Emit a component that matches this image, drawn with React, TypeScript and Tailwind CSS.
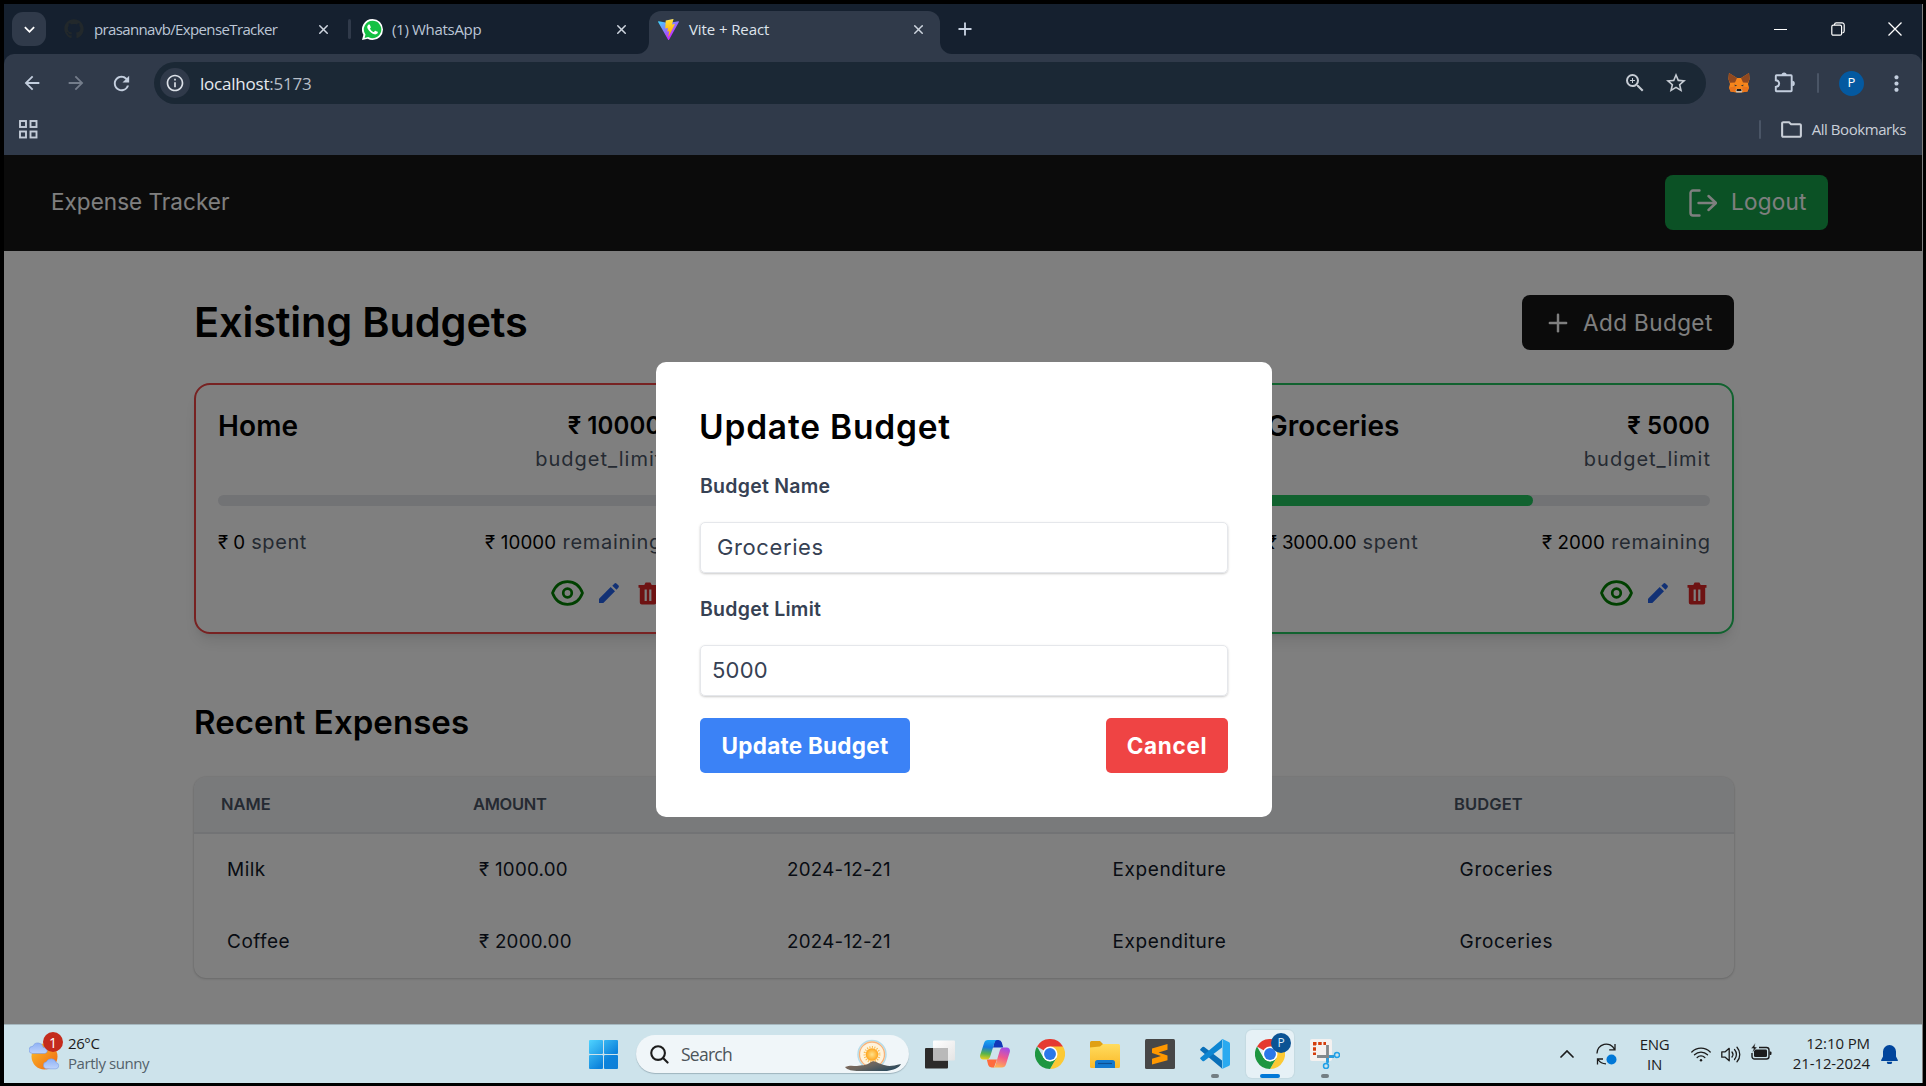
import type { ReactNode } from "react";
import { FaGithub } from "react-icons/fa";
import {
  MdArrowBack,
  MdArrowForward,
  MdRefresh,
  MdInfoOutline,
  MdZoomIn,
  MdStarBorder,
  MdMoreVert,
  MdOutlineFolder,
  MdKeyboardArrowDown,
} from "react-icons/md";
import { Plus, X } from "lucide-react";

/* ---------- Browser icons ---------- */

function WhatsAppIcon() {
  return (
    <svg viewBox="0 0 24 24" className="size-[21px]">
      <path d="M12 0a12 12 0 0 1 0 24 12 12 0 0 1-5.6-1.4L0 24l1.6-6A12 12 0 0 1 12 0z" fill="#fff" />
      <path d="M12 2a10 10 0 1 1-5 18.6l-4 1 1-3.8A10 10 0 0 1 12 2z" fill="#15c143" />
      <path
        d="M17.472 14.382c-.297-.149-1.758-.867-2.03-.967-.273-.099-.471-.148-.67.15-.197.297-.767.966-.94 1.164-.173.199-.347.223-.644.075-.297-.15-1.255-.463-2.39-1.475-.883-.788-1.48-1.761-1.653-2.059-.173-.297-.018-.458.13-.606.134-.133.298-.347.446-.52.149-.174.198-.298.298-.497.099-.198.05-.371-.025-.52-.075-.149-.669-1.612-.916-2.207-.242-.579-.487-.5-.669-.51-.173-.008-.371-.01-.57-.01-.198 0-.52.074-.792.372-.272.297-1.04 1.016-1.04 2.479 0 1.462 1.065 2.875 1.213 3.074.149.198 2.096 3.2 5.077 4.487.709.306 1.262.489 1.694.625.712.227 1.36.195 1.871.118.571-.085 1.758-.719 2.006-1.413.248-.694.248-1.289.173-1.413-.074-.124-.272-.198-.57-.347z"
        fill="#fff"
      />
    </svg>
  );
}

function ViteIcon() {
  return (
    <svg viewBox="0 0 256 257" className="size-[21px]">
      <defs>
        <linearGradient id="viteBody" x1="0" x2="0.57" y1="0.08" y2="0.79">
          <stop offset="0" stopColor="#41d1ff" />
          <stop offset="1" stopColor="#bd34fe" />
        </linearGradient>
        <linearGradient id="viteBolt" x1="0.43" x2="0.5" y1="0.02" y2="0.9">
          <stop offset="0" stopColor="#ffea83" />
          <stop offset="0.1" stopColor="#ffdd35" />
          <stop offset="1" stopColor="#ffa800" />
        </linearGradient>
      </defs>
      <path fill="url(#viteBody)" d="M255.150 37.940 134.900 252.980c-2.480 4.440-8.860 4.470-11.380.050L.880 37.960c-2.750-4.810 1.370-10.640 6.820-9.660l120.390 21.520a6.540 6.540 0 0 0 2.320 0l117.870-21.490c5.440-.990 9.570 4.800 6.870 9.610Z" />
      <path fill="url(#viteBolt)" d="M185.430.060 96.440 17.500a3.270 3.270 0 0 0-2.630 3.010l-5.480 92.460a3.270 3.270 0 0 0 4 3.380l24.780-5.720a3.270 3.270 0 0 1 3.940 3.850l-7.360 36.050a3.270 3.270 0 0 0 4.150 3.780l15.300-4.650a3.270 3.270 0 0 1 4.150 3.790l-11.700 56.620c-.730 3.540 3.980 5.470 5.940 2.440l1.310-2.030 72.520-144.720c1.210-2.420-.880-5.190-3.540-4.670l-25.500 4.920a3.270 3.270 0 0 1-3.770-4.120l16.650-57.700a3.270 3.270 0 0 0-3.770-4.120Z" />
    </svg>
  );
}

function FoxIcon() {
  return (
    <svg viewBox="0 0 22 20" className="h-[20px] w-[22px]">
      <path d="M1 0l8 5h4l8-5 .6 6-1.6 5 1 3.500-1.500 4-3 .4L14 19.600H8l-2.500-.7-3-.4L1 14.500 2 11 .400 6z" fill="#f6851b" />
      <path d="M1 0l8 5-2 4.500-5 .3L.400 6zM21 0l-8 5 2 4.500 5 .3L21.600 6z" fill="#8f4820" />
      <path d="M1 14.500l6-1 1.500 4-3 1.400-3-.4zM21 14.500l-6-1-1.500 4 3 1.400 3-.4z" fill="#e8731c" />
      <path d="M6.500 11.500l2.700 1.300-2.300.5zM15.500 11.500l-2.700 1.300 2.300.5z" fill="#2b3440" />
      <path d="M7.500 17l1.500-.8h4l1.500.8-.8 2.600H8.300z" fill="#c9bfb5" />
      <path d="M9 16h4l.5 1.900h-5z" fill="#1c1c1c" />
    </svg>
  );
}

function PuzzleIcon() {
  return (
    <svg viewBox="0 0 22 21" className="h-[21px] w-[22px]">
      <path
        d="M2.500 3.200H17a.7.7 0 0 1 .7.700v14.700a.7.7 0 0 1-.7.700H2.500a.7.7 0 0 1-.7-.7v-3.700c2.600-.3 3.400-1.700 3.400-3.300S4.400 8.600 1.800 8.300V3.900a.7.7 0 0 1 .7-.7z"
        fill="none"
        stroke="currentColor"
        strokeWidth="1.900"
      />
      <path d="M7.500 3a2.600 2.600 0 0 1 5.200 0zM18.200 8.800a2.600 2.600 0 0 1 0 5.200z" fill="currentColor" />
    </svg>
  );
}

function AppsIcon() {
  return (
    <svg viewBox="0 0 19 19" className="size-[19px]" fill="none" stroke="#c4ccd8" strokeWidth="1.900">
      <rect x="1" y="1" width="6" height="6" />
      <rect x="11.500" y="1" width="6" height="6" />
      <rect x="1" y="11.500" width="6" height="6" />
      <rect x="11.500" y="11.500" width="6" height="6" />
    </svg>
  );
}

/* ---------- Page icons ---------- */

function LogoutIcon() {
  return (
    <svg viewBox="0 0 28 28" className="size-[28px]" fill="none" stroke="currentColor" strokeWidth="2.400" strokeLinecap="round" strokeLinejoin="round">
      <path d="M10.500 1.500H4a2.500 2.500 0 0 0-2.500 2.500v20A2.500 2.500 0 0 0 4 26.500h6.500" />
      <path d="M9.500 14H27M19.500 7l7.500 7-7.500 7" />
    </svg>
  );
}

function EyeIcon() {
  return (
    <svg viewBox="0 0 33 26" className="h-[26px] w-[33px]" fill="none" stroke="#008000" strokeWidth="2.700">
      <path d="M1.500 13C4.300 5.600 9.800 1.600 16.500 1.600S28.700 5.600 31.500 13c-2.800 7.400-8.300 11.400-15 11.400S4.300 20.400 1.500 13z" strokeLinejoin="round" />
      <circle cx="16.500" cy="13" r="4.300" />
    </svg>
  );
}

function PencilIcon() {
  return (
    <svg viewBox="0 0 20 20" className="size-[20px]" fill="#2563eb">
      <path d="M0 20v-4.300L11.700 4l4.300 4.300L4.300 20z" />
      <path d="M13.300 2.700l2-2a1.700 1.700 0 0 1 2.400 0l1.600 1.600a1.700 1.700 0 0 1 0 2.400l-1.800 2z" />
    </svg>
  );
}

function TrashIcon() {
  return (
    <svg viewBox="0 0 20 23" className="h-[23px] w-[20px]" fill="#dc2626">
      <path fillRule="evenodd" d="M.5 3h5.800L7.600.5h4.800L13.700 3h5.800v2.700h-1.300v14.800a2 2 0 0 1-2 2H3.800a2 2 0 0 1-2-2V5.700H.5zM6.600 7.500v11.500h2.200V7.500zm4.600 0v11.500h2.200V7.500z" />
    </svg>
  );
}

/* ---------- Taskbar icons ---------- */

function WeatherIcon() {
  return (
    <svg viewBox="0 0 31 34" className="h-[34px] w-[31px]">
      <defs>
        <linearGradient id="sunDisc" x1="0" y1="0" x2="1" y2="1">
          <stop offset="0" stopColor="#fbc02d" />
          <stop offset="1" stopColor="#f0640e" />
        </linearGradient>
        <linearGradient id="cloudFill" x1="0" y1="0" x2="0" y2="1">
          <stop offset="0" stopColor="#8fb1f5" />
          <stop offset="1" stopColor="#bdd3fb" />
        </linearGradient>
      </defs>
      <circle cx="15.500" cy="19.500" r="13" fill="url(#sunDisc)" />
      <path d="M3.500 16.500a3.600 3.600 0 0 1 .3-7.200 5.500 5.500 0 0 1 10.500 1.200 3 3 0 0 1 1.700 6z" fill="url(#cloudFill)" stroke="#6f93e0" strokeWidth=".5" />
      <path d="M17 31.800a3.600 3.600 0 0 1 .3-7 5.400 5.400 0 0 1 10 .9 3.100 3.100 0 0 1-.3 6.100z" fill="url(#cloudFill)" stroke="#6f93e0" strokeWidth=".5" />
    </svg>
  );
}

function WindowsIcon() {
  return (
    <svg viewBox="0 0 29 29" className="size-[29px]">
      <defs>
        <linearGradient id="winFill" gradientUnits="userSpaceOnUse" x1="0" y1="0" x2="26" y2="29">
          <stop offset="0" stopColor="#4fd3ff" />
          <stop offset="0.700" stopColor="#0c83dc" />
          <stop offset="1" stopColor="#0f7fd6" />
        </linearGradient>
      </defs>
      <g fill="url(#winFill)">
        <rect width="14" height="14" rx="1" />
        <rect x="15" width="14" height="14" rx="1" />
        <rect y="15" width="14" height="14" rx="1" />
        <rect x="15" y="15" width="14" height="14" rx="1" />
      </g>
    </svg>
  );
}

function SunriseArt() {
  return (
    <svg viewBox="0 0 56 33" className="h-[33px] w-[56px]">
      <defs>
        <linearGradient id="hill" x1="0" y1="0" x2="1" y2="0.600">
          <stop offset="0" stopColor="#8d6a55" />
          <stop offset="0.500" stopColor="#6b6660" />
          <stop offset="1" stopColor="#2d4a5c" />
        </linearGradient>
        <radialGradient id="sunCore">
          <stop offset="0" stopColor="#ffe28a" />
          <stop offset="1" stopColor="#ffa41c" />
        </radialGradient>
      </defs>
      <circle cx="27" cy="15.500" r="14" fill="#fff3dc" stroke="#b6dcea" strokeWidth="1.500" />
      <circle cx="27" cy="15.500" r="12.500" fill="none" stroke="#f7b27a" strokeWidth="1.300" />
      <circle cx="27" cy="15.500" r="7.500" fill="none" stroke="#f9b949" strokeWidth="2" strokeDasharray="1 1.500" />
      <circle cx="27" cy="15.500" r="6.300" fill="url(#sunCore)" />
      <path d="M0 28c5-2 8-1 12-1 4-1 9 0 14-4 3-2 6 1 10 2 5 2 9 3 20 0-2 4-8 6-14 7H14c-6 0-12-1-14-4z" fill="url(#hill)" />
    </svg>
  );
}

function TaskViewIcon() {
  return (
    <svg viewBox="0 0 30 29" className="h-[29px] w-[30px]">
      <defs>
        <linearGradient id="tvFront" x1="0" y1="0" x2="1" y2="1">
          <stop offset="0" stopColor="#fff" />
          <stop offset="1" stopColor="#e4e4e4" />
        </linearGradient>
      </defs>
      <rect y="8" width="23" height="20.500" rx="1" fill="#2c2b2a" />
      <rect x="8" y=".5" width="22" height="20" rx="1" fill="url(#tvFront)" />
      <rect x="8" y="8" width="15" height="12.500" fill="#b9b9b9" />
    </svg>
  );
}

function CopilotIcon() {
  return (
    <svg viewBox="0 0 30 28" className="h-[28px] w-[30px]">
      <defs>
        <linearGradient id="cpLeft" x1="0.300" y1="0" x2="0.200" y2="1">
          <stop offset="0" stopColor="#1ba6f2" />
          <stop offset="0.350" stopColor="#1479e0" />
          <stop offset="0.700" stopColor="#5bb548" />
          <stop offset="1" stopColor="#f3cf1b" />
        </linearGradient>
        <linearGradient id="cpRight" x1="0.700" y1="0" x2="0.400" y2="1">
          <stop offset="0" stopColor="#a04be8" />
          <stop offset="0.500" stopColor="#f0598c" />
          <stop offset="1" stopColor="#ffb054" />
        </linearGradient>
      </defs>
      <path d="M15 0h3.500a3.500 3.500 0 0 1 3.300 2.600L23.200 7.500H17l-4 0z" fill="#1238b8" />
      <path d="M6.800 19.500H17L14 27.500h-2.500a3.500 3.500 0 0 1-3.300-2.500z" fill="#ff6b3d" />
      <path d="M8 0h9.500c-2 0-2.600 1.300-3.200 3.300L10.200 16.500c-.6 2-1.800 3-3.700 3H3.200C.800 19.500-.4 17.500.200 15L4 3.200C4.700 1 6 0 8 0z" fill="url(#cpLeft)" />
      <path d="M22 27.500h-9.500c2 0 2.600-1.300 3.200-3.300L19.800 10.500c.6-2 1.800-3 3.700-3h3.300c2.400 0 3.600 2 3 4.500L26 24.300c-.7 2.200-2 3.200-4 3.200z" fill="url(#cpRight)" />
    </svg>
  );
}

function ChromeIcon() {
  return (
    <svg viewBox="0 0 48 48" className="size-[30px]">
      <path d="M24 24 3.200 12A24 24 0 0 1 44.800 12z" fill="#e53a30" />
      <path d="M24 12H44.800A24 24 0 0 1 24 48L34.400 30z" fill="#fcc934" />
      <path d="M3.200 12 13.600 30 24 36 34.400 30 24 48A24 24 0 0 1 3.200 12z" fill="#1e9641" />
      <circle cx="24" cy="24" r="12" fill="#fff" />
      <circle cx="24" cy="24" r="9.500" fill="#2b78e9" />
    </svg>
  );
}

function ExplorerIcon() {
  return (
    <svg viewBox="0 0 30 27" className="h-[27px] w-[30px]">
      <defs>
        <linearGradient id="folderFill" x1="0" y1="0" x2="0" y2="1">
          <stop offset="0" stopColor="#ffdc5e" />
          <stop offset="1" stopColor="#fbb928" />
        </linearGradient>
      </defs>
      <path d="M0 1.500A1.500 1.500 0 0 1 1.500 0H10l3 3v5H0z" fill="#e0a014" />
      <path d="M0 6.500 10 5.500 13 3h15.500A1.500 1.500 0 0 1 30 4.500V25.500A1.500 1.500 0 0 1 28.500 27h-27A1.500 1.500 0 0 1 0 25.500z" fill="url(#folderFill)" />
      <path d="M5 27v-5.500a2.500 2.500 0 0 1 2.500-2.500h15a2.500 2.500 0 0 1 2.500 2.500V27z" fill="#1479cf" />
      <path d="M8 22.500h14" stroke="#0c4f92" strokeWidth="1.200" />
    </svg>
  );
}

function SublimeIcon() {
  return (
    <svg viewBox="0 0 30 30" className="size-[30px]">
      <rect width="30" height="30" rx="1.500" fill="#474747" />
      <path d="M22.500 5v5.700l-9 2.900 9 2.900v4.700L7 25.500V19.700l9-2.800-9-2.900V9.500z" fill="#ff9800" />
    </svg>
  );
}

function VSCodeIcon() {
  return (
    <svg viewBox="0 0 30 30" className="size-[30px]">
      <path d="M.700 9.800 2.500 8.100a1.500 1.500 0 0 1 1.700 0L22 21.500v8L.600 11.500a1.100 1.100 0 0 1 .1-1.700z" fill="#0a6fb8" />
      <path d="M.700 20.200l1.800 1.700a1.500 1.500 0 0 0 1.700 0L22 8.500V.500L.600 18.500a1.100 1.100 0 0 0 .1 1.700z" fill="#0d86d2" />
      <path d="M22 30c-.5 0-1-.2-1.300-.5.8.7 1.800.1 1.800-.8V1.300c0-.9-1-1.500-1.800-.8C21 .200 21.700-.1 22.500.100l6.200 3c.8.400 1.300 1.100 1.300 2v19.800c0 .9-.5 1.600-1.300 2z" fill="#2aaaf0" />
    </svg>
  );
}

function SnipIcon() {
  return (
    <svg viewBox="0 0 30 30" className="size-[30px]">
      <rect width="22" height="22" rx="2" fill="#f4f1f0" />
      <path d="M3 4.500h13M4.500 3v13" stroke="#d53c0b" strokeWidth="3" strokeDasharray="3.500 1.700" fill="none" />
      <path d="M17.500 6v17M7 17.500h17" stroke="#82888c" strokeWidth="2.800" fill="none" />
      <path d="M17.500 19v5M19 17.500h5" stroke="#1fa0e8" strokeWidth="2.500" />
      <circle cx="27" cy="16" r="2.500" fill="none" stroke="#1fa0e8" strokeWidth="1.500" />
      <circle cx="16" cy="27" r="2.500" fill="none" stroke="#1fa0e8" strokeWidth="1.500" />
    </svg>
  );
}

function SyncIcon() {
  return (
    <svg viewBox="0 0 21 22" className="h-[22px] w-[21px]" fill="none" stroke="#1c1c1c" strokeWidth="1.300">
      <path d="M1 10.500A9.200 9.200 0 0 1 18.500 6.300M19 1v5.800h-5.800" />
      <path d="M1.500 21.500v-5.500h5.500M2 16.500a9.500 9.500 0 0 0 8 4.300" />
      <circle cx="15.500" cy="16.500" r="5" fill="#0078d7" stroke="none" />
    </svg>
  );
}

function WifiIcon() {
  return (
    <svg viewBox="0 0 20 16" className="h-[16px] w-[20px]" fill="none" stroke="#1c1c1c" strokeWidth="1.300" strokeLinecap="round">
      <path d="M.800 6a13 13 0 0 1 18.400 0M3.500 8.800a9.200 9.200 0 0 1 13 0M6.200 11.500a5.400 5.400 0 0 1 7.600 0" />
      <circle cx="10" cy="14.300" r="1.200" fill="#1c1c1c" stroke="none" />
    </svg>
  );
}

function VolumeIcon() {
  return (
    <svg viewBox="0 0 20 17" className="h-[17px] w-[20px]" fill="none" stroke="#1c1c1c" strokeWidth="1.300" strokeLinecap="round" strokeLinejoin="round">
      <path d="M.800 5.800v5.400h3.400l4 3.500V2.300l-4 3.500z" />
      <path d="M11 6a4 4 0 0 1 0 5M13.500 3.500a7.500 7.500 0 0 1 0 10M16 1.200a11 11 0 0 1 0 14.600" />
    </svg>
  );
}

function BatteryIcon() {
  return (
    <svg viewBox="0 0 21 18" className="h-[18px] w-[21px]">
      <path d="M8 4.500h7.500a2.500 2.500 0 0 1 2.500 2.500v6.500a2.500 2.500 0 0 1-2.500 2.500h-12A2.500 2.500 0 0 1 1 13.500V10" fill="none" stroke="#1c1c1c" strokeWidth="1.400" />
      <rect x="3" y="6.500" width="13" height="7.500" rx="1.300" fill="#1c1c1c" />
      <path d="M18.500 8.500h1a1 1 0 0 1 1 1v1.500a1 1 0 0 1-1 1h-1z" fill="#1c1c1c" />
      <path d="M4.300 0 0 5.600h2.500L1.300 10 6.200 4H3.800z" fill="#1c1c1c" stroke="#cde3eb" strokeWidth=".5" />
    </svg>
  );
}

function BellIcon() {
  return (
    <svg viewBox="0 0 17 19" className="h-[19px] w-[17px]" fill="#00459c">
      <path d="M8.500 0a6.500 6.500 0 0 1 6.500 6.500v5L16.800 15a.6.600 0 0 1-.5.900H.700A.600.600 0 0 1 .200 15L2 11.500v-5A6.500 6.500 0 0 1 8.500 0z" />
      <path d="M5.800 16.800h5.400a2.700 2.700 0 0 1-5.400 0z" />
    </svg>
  );
}

/* ---------- Browser window ---------- */

function TabClose() {
  return <X className="size-[15px] text-[#ced5df]" strokeWidth={2.4} />;
}

function TabStrip() {
  return (
    <div className="flex h-[50px] items-center bg-[#15202f] text-[15px] text-[#bcc6d6]">
      <button className="ml-2 flex size-[34px] items-center justify-center rounded-[11px] bg-[#303a4a]">
        <MdKeyboardArrowDown className="size-[21px] text-white" />
      </button>
      <div className="ml-[18px] flex w-[285px] items-center">
        <FaGithub className="size-[20px] text-[#22282b]" />
        <span className="ml-[10px] whitespace-nowrap tracking-[-0.63px]">prasannavb/ExpenseTracker</span>
        <span className="ml-auto mr-[18px]">
          <TabClose />
        </span>
      </div>
      <div className="-ml-px h-[20px] w-[3px] shrink-0 rounded bg-[#303a4a]" />
      <div className="ml-[11px] flex w-[287px] items-center">
        <WhatsAppIcon />
        <span className="ml-[9px] whitespace-nowrap tracking-[-0.31px]">(1) WhatsApp</span>
        <span className="ml-auto mr-[20px]">
          <TabClose />
        </span>
      </div>
      <div className="relative flex h-[43px] w-[291px] items-center self-end rounded-t-xl bg-[#303a4a] pb-[7px] pl-[9px] text-[#dfe4ec]">
        <span className="absolute bottom-0 -left-3 size-3 bg-[#303a4a]">
          <span className="block size-full rounded-br-xl bg-[#15202f]" />
        </span>
        <span className="absolute -right-3 bottom-0 size-3 bg-[#303a4a]">
          <span className="block size-full rounded-bl-xl bg-[#15202f]" />
        </span>
        <ViteIcon />
        <span className="ml-[10px] tracking-[-0.1px]">Vite + React</span>
        <span className="ml-auto mr-[14px]">
          <TabClose />
        </span>
      </div>
      <Plus className="ml-[15px] size-[20px] text-[#c9d3e2]" strokeWidth={2.2} />
      <div className="ml-auto mr-[20px] flex items-center gap-[43.500px] text-white">
        <span className="h-px w-[13px] bg-white" />
        <svg viewBox="0 0 14 14" className="size-[14px]" fill="none" stroke="currentColor" strokeWidth="1.200">
          <rect x=".8" y="3.200" width="9.800" height="10" rx="1.500" />
          <path d="M3.500 3V2.500A1.800 1.800 0 0 1 5.300.800H11a2.200 2.200 0 0 1 2.200 2.200v6a1.800 1.800 0 0 1-1.800 1.800" />
        </svg>
        <svg viewBox="0 0 14 14" className="size-[14px]" stroke="currentColor" strokeWidth="1.300">
          <path d="M.5.5l13 13M13.500.5l-13 13" />
        </svg>
      </div>
    </div>
  );
}

function Toolbar() {
  return (
    <div className="bg-[#15202f]">
      <div className="h-[101px] rounded-t-[10px] bg-[#303a4a]">
        <div className="flex h-[58px] items-center text-[#c3cede]">
          <MdArrowBack className="ml-[17px] size-[22px]" />
          <MdArrowForward className="ml-[22px] size-[22px] text-[#747d8b]" />
          <MdRefresh className="ml-[23px] size-[23px]" />
          <div className="ml-[21px] flex h-[42px] w-[1552px] items-center rounded-full bg-[#1b2835] pl-[6px]">
            <span className="flex size-[30px] items-center justify-center rounded-full bg-[#303a4a]">
              <MdInfoOutline className="size-[20px] text-[#dce1e8]" />
            </span>
            <span className="ml-[10px] pt-px text-[17px] tracking-[-0.22px] text-[#e6eaef]">
              localhost<span className="text-[#b7bec8]">:5173</span>
            </span>
            <MdZoomIn className="ml-auto size-[24px] text-[#c6ccd4]" />
            <MdStarBorder className="ml-[17px] mr-[18px] size-[24px] text-[#c6ccd4]" />
          </div>
          <span className="ml-[22px]">
            <FoxIcon />
          </span>
          <span className="ml-[24px] -mt-[2px]">
            <PuzzleIcon />
          </span>
          <span className="ml-[21px] h-[20px] w-[2px] rounded bg-[#4a5566]" />
          <span className="ml-[20px] flex size-[25px] items-center justify-center rounded-full bg-[#0459a0] text-[13px] text-white">P</span>
          <MdMoreVert className="ml-[20px] size-[25px]" />
        </div>
        <div className="flex h-[35px] items-center pl-[15px] text-[15px] text-[#c9cfd8]">
          <AppsIcon />
          <span className="ml-auto h-[19px] w-[2px] rounded bg-[#4a5566]" />
          <MdOutlineFolder className="ml-[18px] size-[25px]" />
          <span className="ml-[8px] mr-[16px] tracking-[-0.43px]">All Bookmarks</span>
        </div>
      </div>
    </div>
  );
}

/* ---------- Expense tracker page ---------- */

interface Budget {
  name: string;
  limit: string;
  spent: string;
  remaining: string;
  percent: number;
  frame: string;
}

function BudgetCard({ budget }: { budget: Budget }) {
  return (
    <div className={`h-[251px] rounded-[16px] border-2 px-[22px] pt-[25px] shadow-lg ${budget.frame}`}>
      <div className="flex h-[32px] items-center justify-between font-semibold text-black">
        <h3 className="text-[28px] tracking-[0.1px]">{budget.name}</h3>
        <span className="text-[24px] tracking-[0.1px]">{budget.limit}</span>
      </div>
      <div className="-mr-[1px] mt-[3px] h-[28px] text-right text-[20px] leading-[28px] tracking-[1px] text-gray-600">budget_limit</div>
      <div className="mt-[22px] h-[11px] overflow-hidden rounded-full bg-gray-200">
        <div className="h-full rounded-full bg-[#22c55e]" style={{ width: `${budget.percent}%` }} />
      </div>
      <div className="mt-[22px] flex h-[28px] items-center justify-between whitespace-nowrap text-[20px] text-gray-600">
        <span className="tracking-[0.600px]">
          <span className="text-[18.750px] tracking-[-0.1px] text-black">{budget.spent}</span> spent
        </span>
        <span className="-mr-[0.700px] tracking-[0.700px]">
          <span className="text-[18.750px] tracking-[0.1px] text-black">{budget.remaining}</span> remaining
        </span>
      </div>
      <div className="mt-[24px] flex h-[26px] items-center justify-end pr-[3px]">
        <EyeIcon />
        <span className="ml-[15px]">
          <PencilIcon />
        </span>
        <span className="ml-[19px]">
          <TrashIcon />
        </span>
      </div>
    </div>
  );
}

const home: Budget = { name: "Home", limit: "₹ 10000", spent: "₹ 0", remaining: "₹ 10000", percent: 0, frame: "border-[#ef4444]" };
const groceries: Budget = { name: "Groceries", limit: "₹ 5000", spent: "₹ 3000.00", remaining: "₹ 2000", percent: 60, frame: "col-start-3 border-[#22c55e]" };

const expenses = [
  { name: "Milk", amount: "₹ 1000.00" },
  { name: "Coffee", amount: "₹ 2000.00" },
];

function Page() {
  return (
    <div className="h-full bg-white">
      <header className="flex h-[96px] items-center justify-between bg-[#171717] pb-px pl-[47px] pr-[94px] text-[22.500px] text-white">
        <span className="pb-px tracking-[0.03px]">Expense Tracker</span>
        <button className="flex h-[55px] w-[163px] items-center rounded-[8px] bg-[#16a34a] pl-[24px]">
          <LogoutIcon />
          <span className="ml-[14px] pb-px tracking-[0.25px]">Logout</span>
        </button>
      </header>
      <main className="ml-[190px] w-[1540px] pt-[44px]">
        <div className="flex items-center justify-between">
          <h1 className="text-[41.500px] leading-[55px] font-semibold tracking-[-0.15px] text-black">Existing Budgets</h1>
          <button className="flex h-[55px] w-[212px] items-center rounded-[8px] bg-[#171717] pl-[22px] text-[22.500px] tracking-[0.42px] text-white">
            <Plus className="size-[28px]" strokeWidth={2.1} />
            <span className="ml-[11px]">Add Budget</span>
          </button>
        </div>
        <div className="mt-[33px] grid grid-cols-3 gap-[33px]">
          <BudgetCard budget={home} />
          <BudgetCard budget={groceries} />
        </div>
        <h2 className="mt-[66px] text-[33px] leading-[44px] font-semibold tracking-[0.05px] text-black">Recent Expenses</h2>
        <div className="mt-[33px] overflow-hidden rounded-[12px] shadow-[0_1px_3px_0_rgba(0,0,0,0.150),0_0_2px_0_rgba(0,0,0,0.150)]">
          <div className="grid h-[57px] grid-cols-[252px_308px_326px_347px_1fr] items-center border-b-2 border-gray-200 bg-gray-100 text-[16.500px] font-semibold text-gray-600">
            <span className="pl-[27px]">NAME</span>
            <span className="pl-[27px] tracking-[-0.31px]">AMOUNT</span>
            <span className="col-start-5 pl-[27px] tracking-[0.1px]">BUDGET</span>
          </div>
          {expenses.map((e) => (
            <div key={e.name} className="grid h-[72px] grid-cols-[252px_308px_326px_347px_1fr] items-center text-[19px] text-gray-900">
              <span className="pl-[33px] tracking-[0.5px]">{e.name}</span>
              <span className="pl-[33px] text-[18.750px] tracking-[0.25px]">{e.amount}</span>
              <span className="pl-[33px] text-[18.750px] tracking-[0.25px]">2024-12-21</span>
              <span className="pl-[32.500px] tracking-[0.6px]">Expenditure</span>
              <span className="pl-[32.500px] tracking-[0.7px]">Groceries</span>
            </div>
          ))}
        </div>
      </main>
    </div>
  );
}

function Field({ label, children }: { label: string; children: ReactNode }) {
  return (
    <div className="mt-[22px]">
      <div className="h-[28px] text-[19.500px] leading-[28px] font-semibold tracking-[0.25px] text-gray-700">{label}</div>
      <div className="mt-[22px] flex h-[51px] items-center rounded-[5px] border border-gray-200 text-[22px] text-gray-700 shadow-[0_1px_3px_0_rgba(0,0,0,0.100),0_1px_2px_0_rgba(0,0,0,0.120)]">{children}</div>
    </div>
  );
}

function UpdateBudgetModal() {
  return (
    <div className="absolute inset-0 flex items-center justify-center bg-black/50 pl-[2px]">
      <div className="h-[455px] w-[616px] rounded-[10px] bg-white px-[44px] pt-[43px]">
        <h2 className="-ml-[1px] text-[33.500px] leading-[45px] font-semibold tracking-[0.800px] text-black">Update Budget</h2>
        <Field label="Budget Name">
          <span className="pl-[16px] tracking-[0.6px]">Groceries</span>
        </Field>
        <Field label="Budget Limit">
          <span className="pl-[11px] tracking-[0.2px]">5000</span>
        </Field>
        <div className="mt-[22px] flex justify-between text-[22.500px] font-bold text-white">
          <button className="h-[55px] w-[210px] rounded-[5px] bg-[#3b82f6] tracking-[0.25px]">Update Budget</button>
          <button className="h-[55px] w-[122px] rounded-[5px] bg-[#ef4444] tracking-[0.700px]">Cancel</button>
        </div>
      </div>
    </div>
  );
}

/* ---------- Taskbar ---------- */

function Taskbar() {
  return (
    <div className="flex h-[59px] items-center border-t border-[#a6b8bf] bg-[#cde3eb] font-['Open_Sans',sans-serif] text-[15px] text-[#1c1c1c]">
      <div className="relative ml-[25px]">
        <WeatherIcon />
        <span className="absolute -top-[5px] left-[14px] flex size-[20px] items-center justify-center rounded-full bg-[#c42b1c] text-[14px] text-white">1</span>
      </div>
      <div className="ml-[8px] w-[100px] pb-[2px] leading-[20px]">
        <div className="tracking-[-0.4px]">26°C</div>
        <div className="tracking-[-0.43px] text-[#53616a]">Partly sunny</div>
      </div>
      <div className="ml-[421px]">
        <WindowsIcon />
      </div>
      <div className="ml-[18px] flex h-[38px] w-[273px] items-center rounded-full bg-[#f0f6f9] pl-[14px] shadow-[0_1px_1px_0_#9fb4be]">
        <svg viewBox="0 0 20 20" className="size-[19px]" fill="none" stroke="#1c1c1c" strokeWidth="2.200" strokeLinecap="round">
          <circle cx="8.500" cy="8.500" r="7.200" />
          <path d="M14 14l4.500 4.500" />
        </svg>
        <span className="ml-[12px] pt-px text-[17.500px] tracking-[-0.74px] text-[#4c5459]">Search</span>
        <span className="ml-auto mr-[8px] mt-[3px]">
          <SunriseArt />
        </span>
      </div>
      <div className="ml-[16px] flex items-center gap-[25px]">
        <TaskViewIcon />
        <CopilotIcon />
        <ChromeIcon />
        <ExplorerIcon />
        <SublimeIcon />
        <div className="relative">
          <VSCodeIcon />
          <span className="absolute -bottom-[9px] left-[11px] h-[4px] w-[8px] rounded-full bg-[#737e83]" />
        </div>
        <div className="relative -mx-[9px] flex size-[48px] items-center justify-center rounded-[6px] bg-[#e6f1f6] shadow-[0_0_1px_1px_rgba(0,0,0,0.040)]">
          <ChromeIcon />
          <span className="absolute right-[3px] top-[3px] flex size-[20px] items-center justify-center rounded-full bg-[#0b5394] text-[12px] text-[#d8e8f6]">P</span>
          <span className="absolute bottom-0 left-[14px] h-[4px] w-[20px] rounded-full bg-[#0078d7]" />
        </div>
        <div className="relative">
          <SnipIcon />
          <span className="absolute -bottom-[9px] left-[11px] h-[4px] w-[8px] rounded-full bg-[#737e83]" />
        </div>
      </div>
      <svg viewBox="0 0 14 8" className="ml-[220px] h-[8px] w-[14px]" fill="none" stroke="#1c1c1c" strokeWidth="1.700" strokeLinecap="round">
        <path d="M1 7l6-6 6 6" />
      </svg>
      <span className="ml-[22px]">
        <SyncIcon />
      </span>
      <div className="ml-[22px] w-[31px] text-center leading-[20px] tracking-[-0.3px]">
        <div>ENG</div>
        <div>IN</div>
      </div>
      <span className="ml-[21px]">
        <WifiIcon />
      </span>
      <span className="ml-[10px]">
        <VolumeIcon />
      </span>
      <span className="ml-[10px] pb-1">
        <BatteryIcon />
      </span>
      <div className="ml-auto pb-[2px] text-right leading-[20px] tracking-[-0.1px]">
        <div>12:10 PM</div>
        <div>21-12-2024</div>
      </div>
      <span className="ml-[11px] mr-[24px]">
        <BellIcon />
      </span>
    </div>
  );
}

export default function App() {
  return (
    <div className="h-[1086px] w-[1926px] overflow-hidden bg-black pl-1 pt-1 font-['Open_Sans',sans-serif]">
      <div className="w-[1919px] border-r border-[#808080]">
        <TabStrip />
        <Toolbar />
        <div className="relative h-[869px] font-['Inter',sans-serif]">
          <Page />
          <UpdateBudgetModal />
        </div>
        <Taskbar />
      </div>
    </div>
  );
}
